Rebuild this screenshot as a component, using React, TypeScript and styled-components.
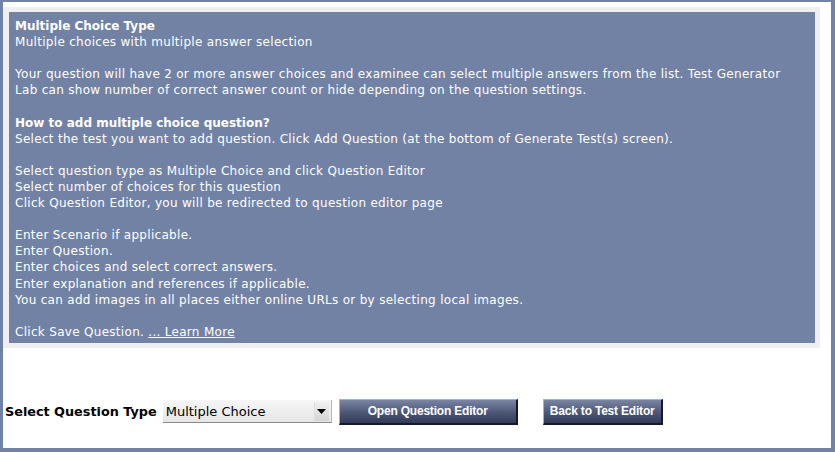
import styled, { createGlobalStyle } from "styled-components";

const GlobalStyle = createGlobalStyle`
  html, body {
    margin: 0;
    padding: 0;
    background: #ffffff;
  }
`;

const Frame = styled.div`
  box-sizing: border-box;
  width: 835px;
  height: 452px;
  border-style: solid;
  border-color: #7282a4;
  border-width: 2px 4px 4px 3px;
  background: #ffffff;
  display: flex;
  flex-direction: column;
  font-family: "DejaVu Sans", Verdana, sans-serif;
`;

const InfoBox = styled.div`
  margin: 5px 0 0 0;
  width: 817px;
  box-sizing: border-box;
  background: #efefef;
  padding: 5px 5px 5px 6px;
`;

const Panel = styled.div`
  background: #7282a4;
  color: #ffffff;
  font-size: 12px;
  letter-spacing: 0.3px;
  line-height: 16.1px;
  padding: 6px 6px 3px 6px;
`;

const Heading = styled.div`
  font-weight: bold;
  letter-spacing: 0;
`;

const Line = styled.div`
  white-space: nowrap;
`;

const Gap = styled.div`
  height: 16.1px;
`;

const LearnMore = styled.a`
  color: #ffffff;
  text-decoration: underline;
  cursor: pointer;
`;

const Toolbar = styled.div`
  display: flex;
  align-items: center;
  margin-top: 51px;
  padding-left: 2px;
`;

const Label = styled.span`
  font-size: 12.8px;
  font-weight: bold;
  color: #000000;
  margin-right: 6px;
`;

const SelectBox = styled.div`
  box-sizing: border-box;
  width: 169px;
  height: 23px;
  display: flex;
  align-items: center;
  justify-content: space-between;
  padding: 0 2px 0 3px;
  background: linear-gradient(#f6f6f6, #e6e6e6);
  border-bottom: 1px solid #8a8a8a;
  border-right: 1px solid #b8b8b8;
  font-size: 13px;
  color: #000000;
  margin-right: 7px;
`;

const Arrow = styled.span`
  width: 14px;
  height: 19px;
  display: flex;
  align-items: center;
  justify-content: center;
  background: linear-gradient(#f0f0f0, #d4d4d4);
  border-left: 1px solid #dedede;
`;

const Button = styled.button<{ $width: number; $gapRight?: number }>`
  box-sizing: border-box;
  width: ${({ $width }) => $width}px;
  height: 26px;
  margin-right: ${({ $gapRight }) => $gapRight ?? 0}px;
  padding: 0;
  font-family: "Liberation Sans", Arial, sans-serif;
  font-size: 12px;
  font-weight: bold;
  letter-spacing: -0.2px;
  color: #ffffff;
  background: linear-gradient(#7a84a4, #4c5675 55%, #323b58);
  border-style: solid;
  border-width: 1px 2px 2px 1px;
  border-color: #9fb0e8 #141a2a #141a2a #9fb0e8;
  cursor: pointer;
`;

export default function App() {
  return (
    <>
      <GlobalStyle />
      <Frame>
        <InfoBox>
          <Panel>
            <Heading>Multiple Choice Type</Heading>
            <Line>Multiple choices with multiple answer selection</Line>
            <Gap />
            <Line>
              Your question will have 2 or more answer choices and examinee can select multiple answers from the list. Test Generator
            </Line>
            <Line>Lab can show number of correct answer count or hide depending on the question settings.</Line>
            <Gap />
            <Heading>How to add multiple choice question?</Heading>
            <Line>Select the test you want to add question. Click Add Question (at the bottom of Generate Test(s) screen).</Line>
            <Gap />
            <Line>Select question type as Multiple Choice and click Question Editor</Line>
            <Line>Select number of choices for this question</Line>
            <Line>Click Question Editor, you will be redirected to question editor page</Line>
            <Gap />
            <Line>Enter Scenario if applicable.</Line>
            <Line>Enter Question.</Line>
            <Line>Enter choices and select correct answers.</Line>
            <Line>Enter explanation and references if applicable.</Line>
            <Line>You can add images in all places either online URLs or by selecting local images.</Line>
            <Gap />
            <Line>
              Click Save Question. <LearnMore>... Learn More</LearnMore>
            </Line>
          </Panel>
        </InfoBox>
        <Toolbar>
          <Label>Select Question Type</Label>
          <SelectBox>
            <span>Multiple Choice</span>
            <Arrow>
              <svg width="9" height="5" viewBox="0 0 9 5">
                <path d="M0 0 H9 L4.5 5 Z" fill="#000" />
              </svg>
            </Arrow>
          </SelectBox>
          <Button $width={179} $gapRight={25}>Open Question Editor</Button>
          <Button $width={120}>Back to Test Editor</Button>
        </Toolbar>
      </Frame>
    </>
  );
}
